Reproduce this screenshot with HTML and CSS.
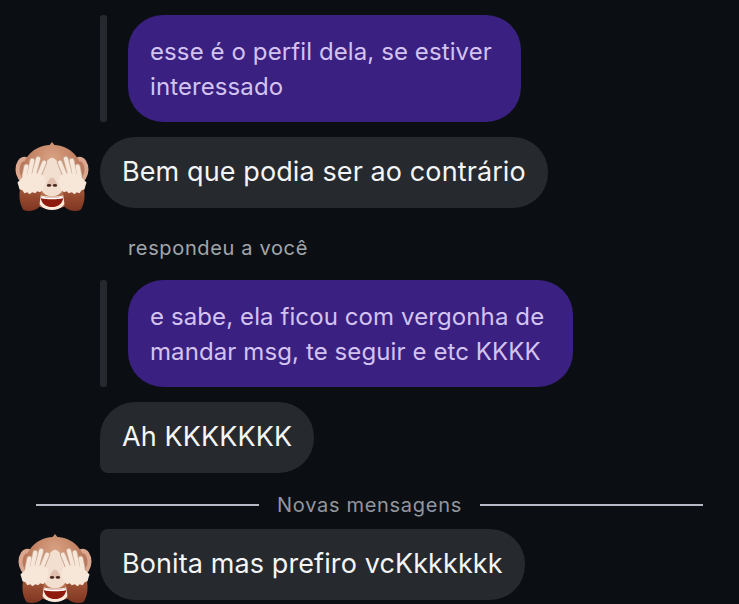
FILE: index.html
```html
<!DOCTYPE html>
<html lang="pt">
<head>
<meta charset="utf-8">
<title>Mensagens</title>
<link rel="stylesheet" href="styles.css">
</head>
<body>
<svg class="defs" width="0" height="0" aria-hidden="true">
  <defs>
    <radialGradient id="fur" cx="50%" cy="25%" r="75%">
      <stop offset="0" stop-color="#d9a284"/>
      <stop offset="1" stop-color="#a9603f"/>
    </radialGradient>
    <linearGradient id="arm" x1="0" y1="0" x2="0" y2="1">
      <stop offset="0" stop-color="#a5583a"/>
      <stop offset="1" stop-color="#7e3520"/>
    </linearGradient>
    <g id="hand">
      <path d="M6 47c-2 8-1 17 3 23 5 2 12 1 16-3l2-16z" fill="url(#arm)"/>
      <g stroke="#c9a48e" stroke-linecap="round" fill="none" stroke-width="6">
        <path d="M10 36l2-10"/>
        <path d="M15 34l3-14"/>
        <path d="M20 33l4-15"/>
        <path d="M25 34l5-12"/>
      </g>
      <g stroke="#f6e7d9" stroke-linecap="round" fill="none" stroke-width="4.200">
        <path d="M10 36l2-10"/>
        <path d="M15 34l3-14"/>
        <path d="M20 33l4-15"/>
        <path d="M25 34l5-12"/>
      </g>
      <path d="M7 38c2-5 18-7 22-3 2 2 3 5 2 8-1 4-3 7-5 9l-3-1-2 2-3-1-3 2-2-2-3 1-2-3-3-1-1-4-1-3z" fill="#f6e7d9"/>
    </g>
    <symbol id="monkey" viewBox="0 0 76 72">
      <ellipse cx="10" cy="29" rx="9" ry="13" fill="#dba78f"/>
      <ellipse cx="66" cy="29" rx="9" ry="13" fill="#dba78f"/>
      <ellipse cx="10" cy="29" rx="5" ry="8.500" fill="#b97a62"/>
      <ellipse cx="66" cy="29" rx="5" ry="8.500" fill="#b97a62"/>
      <path d="M38 1l2.500 3C56 5 68 16 69 34c1 20-12 35-31 35S6 54 7 34C8 16 20 5 35.500 4z" fill="url(#fur)"/>
      <path d="M38 17c6 0 11 15 12 27 0 7-5 12-12 12s-12-5-12-12c1-12 6-27 12-27z" fill="#f2dfd0"/>
      <path d="M23 54c5 3 25 3 30 0 1 10-6 16-15 16s-16-6-15-16z" fill="#fbe9dc"/>
      <path d="M26.500 56c5 2 18 2 23 0 0 7-5 11-11.500 11S26.500 63 26.500 56z" fill="#8d1a0c"/>
      <path d="M26.500 56c5 2 18 2 23 0l-.5 2c-5 1.500-17 1.500-22 0z" fill="#fff"/>
      <path d="M38 37c2 0 3.500 3 5 6 1 2-1 4-2.500 3.500-1-.5-1.500-1-2.500-1s-1.500.5-2.500 1C34 47 32 45 33 43c1.500-3 3-6 5-6z" fill="#e0bfae"/>
      <ellipse cx="35" cy="45" rx="2.200" ry="1.400" fill="#4a2a22"/>
      <ellipse cx="41" cy="45" rx="2.200" ry="1.400" fill="#4a2a22"/>
      <use href="#hand"/>
      <use href="#hand" transform="matrix(-1 0 0 1 76 0)"/>
    </symbol>
  </defs>
</svg>

<main class="chat">
  <section class="quote">
    <span class="quote-bar"></span>
    <p class="bubble-own">esse é o perfil dela, se estiver<br>interessado</p>
  </section>

  <section class="message">
    <svg class="avatar" aria-hidden="true"><use href="#monkey"/></svg>
    <p class="bubble">Bem que podia ser ao contrário</p>
  </section>

  <p class="reply-label">respondeu a você</p>

  <section class="quote">
    <span class="quote-bar"></span>
    <p class="bubble-own">e sabe, ela ficou com vergonha de<br>mandar msg, te seguir e etc KKKK</p>
  </section>

  <section class="message message-plain">
    <p class="bubble bubble-group-start">Ah KKKKKKK</p>
  </section>

  <div class="divider">
    <span class="divider-line"></span>
    <span class="divider-text">Novas mensagens</span>
    <span class="divider-line"></span>
  </div>

  <section class="message message-last">
    <svg class="avatar" aria-hidden="true"><use href="#monkey"/></svg>
    <p class="bubble bubble-group-end">Bonita mas prefiro vcKkkkkkk</p>
  </section>
</main>
</body>
</html>
```

FILE: styles.css
```css
* { box-sizing: border-box; }

html, body {
  margin: 0;
  height: 100%;
  background: #0b0f14;
  overflow: hidden;
}

.defs { position: absolute; }

.chat {
  display: flex;
  flex-direction: column;
  padding: 15px 36px 0 14px;
  font-family: Inter, "Liberation Sans", sans-serif;
}

p { margin: 0; }

.quote {
  display: flex;
  align-items: stretch;
  gap: 21px;
  padding-left: 86px;
}

.quote-bar {
  width: 7px;
  border-radius: 3px;
  background: #262a30;
}

.bubble-own {
  padding: 19px 29px 0 22px;
  height: 107px;
  border-radius: 35px;
  background: #3a2080;
  color: #d3c3f0;
  font-size: 24px;
  line-height: 35px;
  letter-spacing: 0.1px;
  white-space: nowrap;
}

.message {
  display: flex;
  align-items: flex-end;
  gap: 10px;
  margin-top: 15px;
  height: 71px;
}

.message-plain { padding-left: 86px; }

.avatar {
  flex: none;
  width: 76px;
  height: 71px;
  margin-bottom: -4px;
}

.message-last {
  margin-top: 0;
}

.message-last .avatar {
  margin-left: 3px;
  margin-right: -3px;
}

.bubble {
  height: 71px;
  padding: 0 22px 2px;
  display: flex;
  align-items: center;
  border-radius: 35px;
  background: #26292d;
  color: #f4f5f6;
  font-size: 27px;
  letter-spacing: 0.1px;
  white-space: nowrap;
}

.bubble-group-start { border-bottom-left-radius: 8px; }
.bubble-group-end { border-top-left-radius: 8px; }

.reply-label {
  margin: 27px 0 19px 114px;
  color: #a2a6ac;
  font-size: 20px;
  line-height: 26px;
  letter-spacing: 0.65px;
}

.divider {
  display: flex;
  align-items: center;
  gap: 18px;
  margin: 18px 0 10px 22px;
  height: 28px;
}

.divider-line {
  flex: 1;
  height: 1.500px;
  background: #b6bac4;
}

.divider-text {
  color: #92969d;
  font-size: 20px;
  letter-spacing: 0.7px;
  white-space: nowrap;
}
```
